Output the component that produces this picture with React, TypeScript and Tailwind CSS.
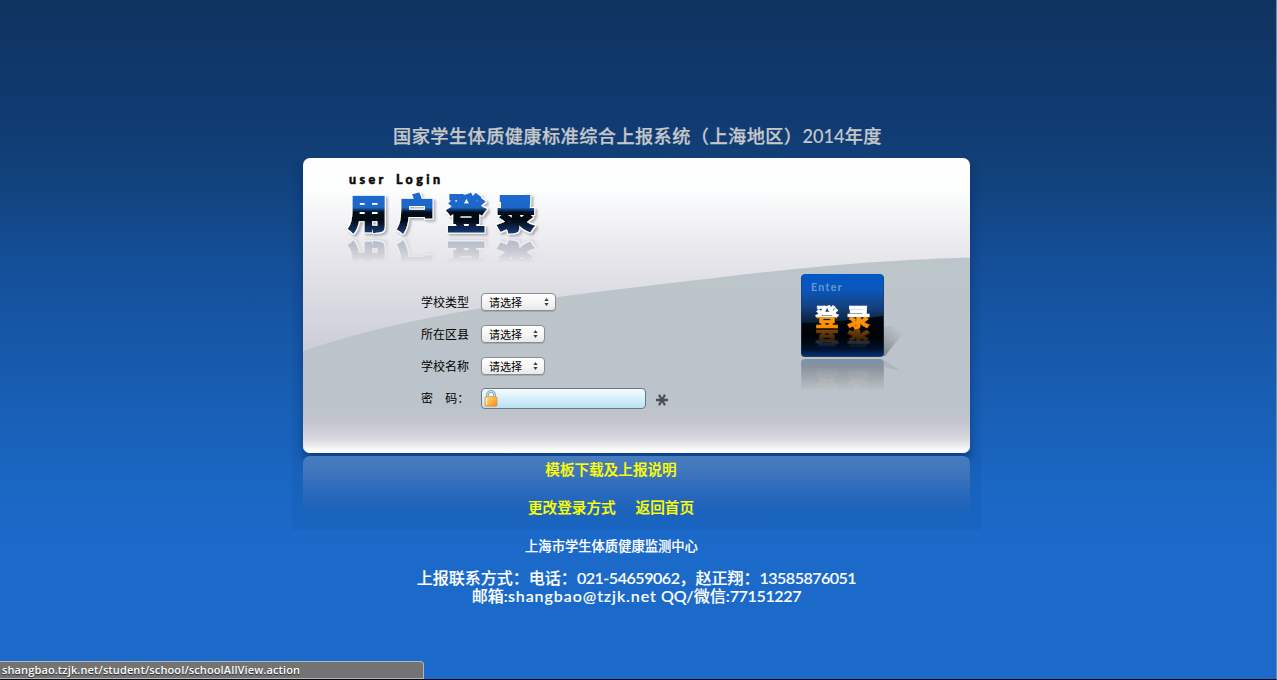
import React from "react";

const CJK = "font-['Lato','Noto_Sans_CJK_SC',sans-serif]";

function PanelBackdrop() {
  return (
    <svg className="absolute inset-0" width="667" height="295" viewBox="0 0 667 295" aria-hidden="true">
      <defs>
        <linearGradient id="upper" x1="0" y1="0" x2="0" y2="200" gradientUnits="userSpaceOnUse">
          <stop offset="0" stopColor="#ffffff" />
          <stop offset="0.15" stopColor="#fdfefe" />
          <stop offset="0.5" stopColor="#e6e6eb" />
          <stop offset="0.75" stopColor="#d8d9e0" />
          <stop offset="1" stopColor="#cbcbd7" />
        </linearGradient>
        <linearGradient id="lower" x1="0" y1="95" x2="0" y2="295" gradientUnits="userSpaceOnUse">
          <stop offset="0" stopColor="#bcc5ca" />
          <stop offset="0.77" stopColor="#bcc4cb" />
          <stop offset="0.83" stopColor="#c1c4cd" />
          <stop offset="0.89" stopColor="#cdced7" />
          <stop offset="0.94" stopColor="#dddde2" />
          <stop offset="0.98" stopColor="#f8f8fa" />
          <stop offset="1" stopColor="#ffffff" />
        </linearGradient>
      </defs>
      <rect width="667" height="295" fill="url(#upper)" />
      <path d="M0 193C110 155 240 140 377 124S560 103 667 99.5V295H0Z" fill="url(#lower)" />
    </svg>
  );
}

function LoginLogo() {
  return (
    <div className="h-[100px]">
      <svg className="block" width="206" height="25" viewBox="0 0 206 25">
        <text x="5" y="19" fontFamily="Lato, sans-serif" fontWeight="900" fontSize="12.5" textLength="91" wordSpacing="3" fill="#0a0a0a" stroke="#0a0a0a" strokeWidth="0.5">
          user Login
        </text>
      </svg>
      <svg
        className="block [-webkit-box-reflect:below_0px_linear-gradient(transparent_45%,rgba(0,0,0,0.28)_95%)]"
        width="206"
        height="47"
        viewBox="0 0 206 47"
      >
        <defs>
          <linearGradient id="logoFill" x1="0" y1="4" x2="0" y2="43" gradientUnits="userSpaceOnUse">
            <stop offset="0" stopColor="#1c6bd2" />
            <stop offset="0.35" stopColor="#1a66c6" />
            <stop offset="0.46" stopColor="#06101f" />
            <stop offset="0.66" stopColor="#02060d" />
            <stop offset="1" stopColor="#123d7a" />
          </linearGradient>
          <filter id="outline" filterUnits="userSpaceOnUse" x="0" y="0" width="206" height="47">
            <feMorphology in="SourceAlpha" operator="dilate" radius="1" result="fat" />
            <feFlood floodColor="#ffffff" />
            <feComposite in2="fat" operator="in" result="white" />
            <feGaussianBlur in="fat" stdDeviation="0.8" />
            <feOffset dx="2" dy="2" result="moved" />
            <feFlood floodColor="#8d8f96" floodOpacity="0.65" />
            <feComposite in2="moved" operator="in" result="shade" />
            <feMerge>
              <feMergeNode in="shade" />
              <feMergeNode in="white" />
              <feMergeNode in="SourceGraphic" />
            </feMerge>
          </filter>
        </defs>
        <text
          x="4 53 102.5 152"
          y="37.5"
          fontFamily="'Noto Sans CJK SC', sans-serif"
          fontWeight="900"
          fontSize="39.5"
          fill="url(#logoFill)"
          stroke="url(#logoFill)"
          strokeWidth="1.8"
          filter="url(#outline)"
        >
          用户登录
        </text>
      </svg>
    </div>
  );
}

function EnterButton() {
  return (
    <div className="relative h-[120px] w-[112px]">
      <svg className="absolute inset-0" width="112" height="120" viewBox="0 0 112 120" aria-hidden="true">
        <defs>
          <linearGradient id="cast" x1="82" y1="82" x2="102" y2="58" gradientUnits="userSpaceOnUse">
            <stop offset="0" stopColor="#666c72" stopOpacity="0.75" />
            <stop offset="1" stopColor="#7b8288" stopOpacity="0" />
          </linearGradient>
        </defs>
        <path d="M82 52L108 52L84 82H82Z" fill="url(#cast)" />
        <path d="M83 86L100 97L83 93Z" fill="#7f8b93" opacity="0.25" />
      </svg>
      <button
        type="button"
        aria-label="登录"
        className="relative block h-[83px] w-[83px] rounded-[4px] [-webkit-box-reflect:below_2px_linear-gradient(transparent_62%,rgba(0,0,0,0.36))]"
      >
        <svg className="block" width="83" height="83" viewBox="0 0 83 83">
          <defs>
            <linearGradient id="btn" x1="0" y1="0" x2="0" y2="83" gradientUnits="userSpaceOnUse">
              <stop offset="0" stopColor="#0058c8" />
              <stop offset="0.2" stopColor="#0c56b8" />
              <stop offset="0.4" stopColor="#13417f" />
              <stop offset="0.6" stopColor="#0c1c36" />
              <stop offset="0.75" stopColor="#000a1c" />
              <stop offset="0.9" stopColor="#001536" />
              <stop offset="1" stopColor="#003580" />
            </linearGradient>
            <linearGradient id="gloss" x1="0" y1="42" x2="0" y2="80" gradientUnits="userSpaceOnUse">
              <stop offset="0" stopColor="#000" stopOpacity="0.85" />
              <stop offset="0.5" stopColor="#000" stopOpacity="0.8" />
              <stop offset="1" stopColor="#000" stopOpacity="0" />
            </linearGradient>
          </defs>
          <rect x="0" y="0.5" width="83" height="82.5" rx="4" fill="#26384f" />
          <rect x="0.5" y="0" width="82" height="82" rx="4" fill="url(#btn)" />
          <path d="M1 49Q40 48 82 42V80H1Z" fill="url(#gloss)" />
          <text x="10" y="17" fontFamily="Lato, sans-serif" fontWeight="900" fontSize="11" textLength="31" fill="#5e94d4">
            Enter
          </text>
        </svg>
        <svg
          className="absolute top-[28px] left-0 [-webkit-box-reflect:below_0px_linear-gradient(transparent_30%,rgba(0,0,0,0.5))]"
          width="83"
          height="27"
          viewBox="0 0 83 27"
        >
          <defs>
            <linearGradient id="btnText" x1="0" y1="2" x2="0" y2="26" gradientUnits="userSpaceOnUse">
              <stop offset="0.52" stopColor="#ffffff" />
              <stop offset="0.53" stopColor="#ff9a10" />
              <stop offset="1" stopColor="#ff8a00" />
            </linearGradient>
          </defs>
          <text x="14 45.5" y="24" fontFamily="'Noto Sans CJK SC', sans-serif" fontWeight="900" fontSize="24" fill="url(#btnText)" stroke="url(#btnText)" strokeWidth="0.5">
            登录
          </text>
        </svg>
      </button>
    </div>
  );
}

function Picker({ wide = false }: { wide?: boolean }) {
  return (
    <button
      type="button"
      className={`${wide ? "w-[75px]" : "w-[64px]"} flex h-[18px] items-center justify-between rounded-[4px] border border-[#8b8d90] bg-linear-to-b from-white via-[#f6f6f6] to-[#e9e9e9] pr-[6px] pl-[7px] text-[11px] leading-none text-black shadow-[0_1px_1px_rgba(0,0,0,0.15)]`}
    >
      <span>请选择</span>
      <svg width="5" height="8" viewBox="0 0 6 8" preserveAspectRatio="none" fill="#404040" aria-hidden="true">
        <path d="M3 0L5.6 3H0.4ZM3 8L0.4 5H5.6Z" />
      </svg>
    </button>
  );
}

function Field({ label, children }: { label: string; children: React.ReactNode }) {
  return (
    <div className="flex h-8 items-center">
      <span className="w-[60px] pt-[1px] text-[12px] whitespace-pre text-black">{label}</span>
      {children}
    </div>
  );
}

function LockIcon() {
  return (
    <svg width="14" height="17" viewBox="0 0 14 17" aria-hidden="true">
      <defs>
        <linearGradient id="lock" x1="0" y1="0" x2="1" y2="1">
          <stop offset="0" stopColor="#ffe09a" />
          <stop offset="0.5" stopColor="#ffb545" />
          <stop offset="1" stopColor="#f28a1c" />
        </linearGradient>
      </defs>
      <path d="M3.4 8V5A3.6 3.6 0 0 1 10.6 5V8" fill="none" stroke="#7fa5ad" strokeWidth="2.6" />
      <path d="M3.4 8V5A3.6 3.6 0 0 1 10.6 5V8" fill="none" stroke="#c4dde0" strokeWidth="1.1" />
      <rect x="1" y="6.8" width="12" height="9.4" rx="1" fill="url(#lock)" stroke="#e29232" strokeWidth="0.8" />
      <path d="M2.5 8V15" stroke="#fff0c0" strokeWidth="1.2" />
    </svg>
  );
}

function Asterisk() {
  return (
    <svg width="12" height="12" viewBox="0 0 12 12" stroke="#4d4f55" strokeWidth="2.3" aria-hidden="true">
      <path d="M0 6H12M3 0.8L9 11.2M9 0.8L3 11.2" />
    </svg>
  );
}

export default function App() {
  return (
    <div
      className={`${CJK} relative flex h-[680px] w-full flex-col items-center overflow-hidden border-r border-b border-r-[#7d8795] border-b-[#05080d] bg-[linear-gradient(180deg,#0e335f_0px,#103a70_110px,#114078_165px,#14509a_270px,#185eb4_400px,#1a67c4_490px,#1b6aca_560px,#1b6ac9_680px)] pt-[123px] text-white`}
    >
      <h1 className="mr-[1px] h-[35px] text-[18.2px] leading-[26px] font-medium tracking-[0.42px] whitespace-nowrap text-[#c6c8ca] [-webkit-text-stroke:0.25px_#c6c8ca]">
        国家学生体质健康标准综合上报系统（上海地区）<span className="tracking-[0px] [-webkit-text-stroke:0px]">2014</span>年度
      </h1>

      <div className="mr-0 -ml-[3px] flex h-[372px] w-[689px] shrink-0 flex-col items-center bg-[linear-gradient(180deg,rgba(10,55,115,0.1),rgba(10,75,150,0.15))]">
        <main className="relative h-[295px] w-[667px] shrink-0 overflow-clip rounded-[7px] shadow-[0_8px_9px_rgba(5,40,95,0.5)]">
          <PanelBackdrop />
          <div className="relative pt-[7px] pl-[41px]">
            <LoginLogo />
          </div>
          <div className="relative flex items-start pt-[21px] pl-[118px]">
            <form className="w-[380px]" onSubmit={(e) => e.preventDefault()}>
              <Field label="学校类型"><Picker wide /></Field>
              <Field label="所在区县"><Picker /></Field>
              <Field label="学校名称"><Picker /></Field>
              <Field label="密    码：">
                <div className="flex h-[21px] w-[165px] items-center rounded-[4px] border border-[#6d767c] bg-linear-to-b from-[#f5fbfe] to-[#b9e2f6] pl-[2px]">
                  <LockIcon />
                  <input type="password" className="w-[140px] bg-transparent text-[12px] outline-none" />
                </div>
                <span className="pt-[4px] pl-[10px]"><Asterisk /></span>
              </Field>
            </form>
            <div className="-mt-[12px]">
              <EnterButton />
            </div>
          </div>
        </main>

        <nav className="relative mt-[3px] flex h-[70px] w-[667px] flex-col items-center rounded-t-[7px] bg-[linear-gradient(180deg,#487dbf_0px,#3d74bb_18px,#2a69bc_36px,#1d64bc_54px,rgba(27,100,188,0)_68px)] pr-[51px] text-[14.6px] leading-[20px] font-medium whitespace-nowrap text-[#ffff00] [-webkit-text-stroke:0.2px_#ffff00]">
          <a className="mt-[4px]">模板下载及上报说明</a>
          <div className="mt-[18px] flex gap-[20px]">
            <a>更改登录方式</a>
            <a>返回首页</a>
          </div>
        </nav>
      </div>

      <footer className="flex flex-col items-center whitespace-nowrap [-webkit-text-stroke:0.15px_#fff]">
        <p className="mt-[6px] mr-[53px] text-[13.3px] leading-[20px] font-medium">上海市学生体质健康监测中心</p>
        <div className="mt-[13px] mr-[3px] text-center text-[16px] leading-[18px] font-medium">
          <p>
            上报联系方式：电话：<span className="tracking-[-0.45px]">021-54659062</span>，赵正翔：
            <span className="tracking-[-0.5px]">13585876051</span>
          </p>
          <p>
            邮箱:<span className="tracking-[0.95px]">shangbao@tzjk.net</span> QQ/微信:
            <span className="tracking-[-0.35px]">77151227</span>
          </p>
        </div>
      </footer>

      <div className="absolute bottom-0 left-0 flex h-[18px] w-[424px] items-center rounded-tr-[4px] border-t border-r border-b border-[#b5b5b5] bg-[#737373] pl-[2px] font-['Open_Sans',sans-serif] text-[11px] font-semibold tracking-[0.12px] text-white [text-shadow:0_1px_1px_rgba(0,0,0,0.7)]">
        shangbao.tzjk.net/student/school/schoolAllView.action
      </div>
    </div>
  );
}
